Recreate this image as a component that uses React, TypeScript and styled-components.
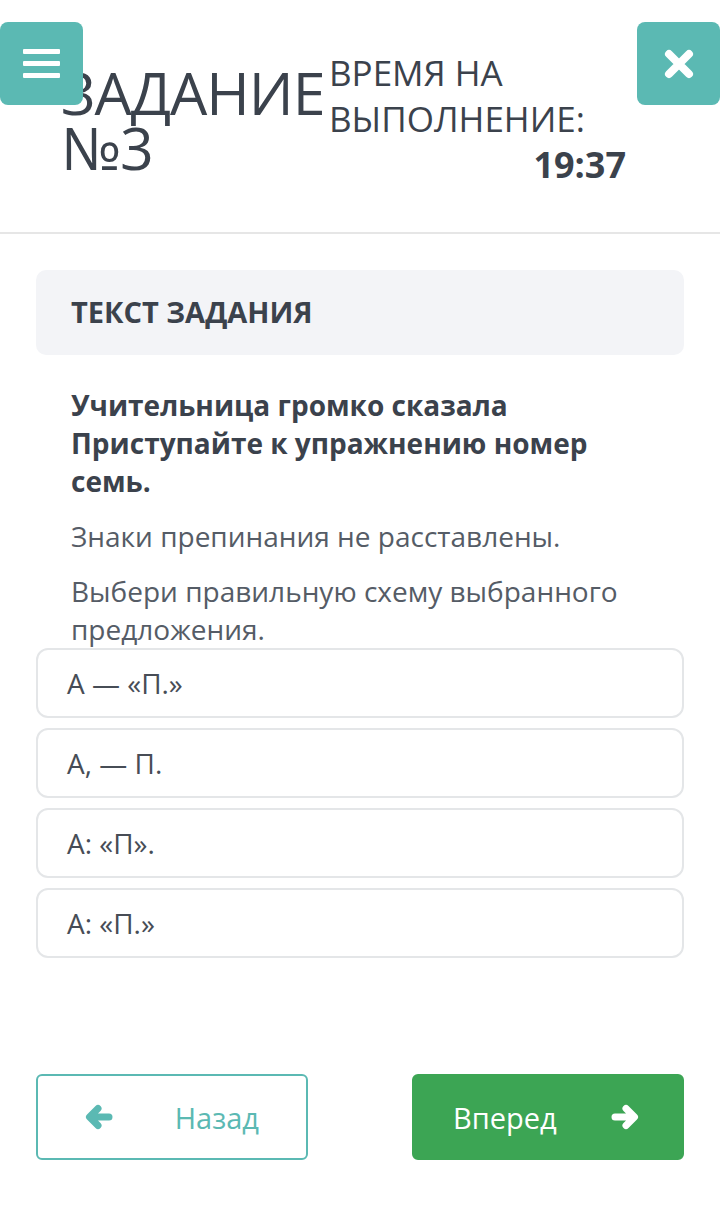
import React from "react";
import styled, { createGlobalStyle } from "styled-components";

const GlobalStyle = createGlobalStyle`
    * {
        box-sizing: border-box;
    }

    body {
        margin: 0;
        background-color: #FFFFFF;
        font-family: "Open Sans", "Noto Sans", sans-serif;
        color: #3b424c;
    }
`;

const Page = styled.div`
    position: relative;
    width: 720px;
    min-height: 1227px;
    background-color: #FFFFFF;
`;

const Header = styled.header`
    display: flex;
    align-items: flex-start;
    height: 234px;
    padding: 50px 0 0 61px;
    border-bottom: 2px solid #e6e6e6;
`;

const Title = styled.h1`
    width: 268px;
    margin: 15px 0 0 0;
    font-size: 59px;
    font-weight: 400;
    line-height: 55px;
    color: #3b424c;
    letter-spacing: -1px;
`;

const Timer = styled.div`
    display: flex;
    flex-direction: column;
    width: 297px;
    font-size: 35px;
    line-height: 46px;
    color: #3b424c;

    > span {
        font-weight: 400;
    }

    > strong {
        align-self: flex-end;
        font-weight: 700;
        font-size: 36px;
    }
`;

const CornerButton = styled.button<{ $side: "left" | "right" }>`
    position: absolute;
    top: 22px;
    ${({ $side }) => ($side === "left" ? "left: 0;" : "right: 0;")}
    width: 83px;
    height: 83px;
    display: flex;
    flex-direction: column;
    justify-content: center;
    align-items: center;
    gap: 7px;
    border: none;
    border-radius: 8px;
    background-color: #5bb9b3;
    color: #FFFFFF;
    padding: 0;
    cursor: pointer;

    > i {
        display: block;
        width: 37px;
        height: 5px;
        background-color: #FFFFFF;
        border-radius: 1px;
    }
`;

const Content = styled.main`
    display: flex;
    flex-direction: column;
    padding: 36px 36px 0 36px;
`;

const TaskHeading = styled.div`
    display: flex;
    align-items: center;
    height: 85px;
    padding: 0 35px 2px 35px;
    border-radius: 10px;
    background-color: #f3f4f7;

    > h2 {
        margin: 0;
        font-size: 29px;
        font-weight: 700;
        color: #3b424c;
    }
`;

const TaskText = styled.div`
    display: flex;
    flex-direction: column;
    gap: 17px;
    padding: 31px 35px 0 35px;
`;

const Paragraph = styled.p<{ $bold?: boolean }>`
    margin: 0;
    font-size: 28px;
    line-height: 38px;
    font-weight: ${({ $bold }) => ($bold ? 700 : 400)};
    color: ${({ $bold }) => ($bold ? "#3b424c" : "#555c66")};
`;

const Options = styled.div`
    display: flex;
    flex-direction: column;
    gap: 10px;
`;

const Option = styled.div`
    display: flex;
    align-items: center;
    height: 70px;
    padding: 0 0 0 29px;
    border: 2px solid #e4e6e8;
    border-radius: 12px;
    background-color: #FFFFFF;
    font-size: 28px;
    color: #474d56;
    cursor: pointer;
`;

const Footer = styled.div`
    display: flex;
    justify-content: space-between;
    margin-top: 116px;
`;

const NavButton = styled.button<{ $primary?: boolean }>`
    display: flex;
    justify-content: space-between;
    align-items: center;
    width: 272px;
    height: 86px;
    padding: ${({ $primary }) => ($primary ? "0 42px 0 39px" : "0 47px 0 46px")};
    border: 2px solid ${({ $primary }) => ($primary ? "#3ca554" : "#5bb9b3")};
    border-radius: 6px;
    background-color: ${({ $primary }) => ($primary ? "#3ca554" : "#FFFFFF")};
    color: ${({ $primary }) => ($primary ? "#FFFFFF" : "#5bb9b3")};
    font-family: "Open Sans", "Noto Sans", sans-serif;
    font-size: 29px;
    cursor: pointer;
`;

// chunky font-awesome style arrow, drawn with round strokes
const Arrow = ({ dir }: { dir: "left" | "right" }) => (
    <svg
        width="30"
        height="28"
        viewBox="0 0 30 28"
        fill="none"
        stroke="currentColor"
        strokeWidth="7"
        strokeLinecap="round"
        strokeLinejoin="round"
        style={{ transform: dir === "right" ? "scaleX(-1)" : undefined }}
    >
        <path d="M25 14H6M14 5.5L5.5 14L14 22.5" />
    </svg>
);

const CloseIcon = () => (
    <svg width="32" height="32" viewBox="0 0 32 32" fill="none" stroke="currentColor" strokeWidth="8" strokeLinecap="round">
        <path d="M6 6L26 26M26 6L6 26" />
    </svg>
);

const options = ["А — «П.»", "А, — П.", "А: «П».", "А: «П.»"];

export default function App() {
    return (
        <Page>
            <GlobalStyle />
            <Header>
                <Title>ЗАДАНИЕ №3</Title>
                <Timer>
                    <span>ВРЕМЯ НА ВЫПОЛНЕНИЕ:</span>
                    <strong>19:37</strong>
                </Timer>
            </Header>

            <CornerButton $side="left" aria-label="Меню">
                <i />
                <i />
                <i />
            </CornerButton>
            <CornerButton $side="right" aria-label="Закрыть">
                <CloseIcon />
            </CornerButton>

            <Content>
                <TaskHeading>
                    <h2>ТЕКСТ ЗАДАНИЯ</h2>
                </TaskHeading>

                <TaskText>
                    <Paragraph $bold>
                        Учительница громко сказала Приступайте к упражнению номер семь.
                    </Paragraph>
                    <Paragraph>Знаки препинания не расставлены.</Paragraph>
                    <Paragraph>Выбери правильную схему выбранного предложения.</Paragraph>
                </TaskText>

                <Options>
                    {options.map((o) => (
                        <Option key={o}>{o}</Option>
                    ))}
                </Options>

                <Footer>
                    <NavButton>
                        <Arrow dir="left" />
                        Назад
                    </NavButton>
                    <NavButton $primary>
                        Вперед
                        <Arrow dir="right" />
                    </NavButton>
                </Footer>
            </Content>
        </Page>
    );
}
